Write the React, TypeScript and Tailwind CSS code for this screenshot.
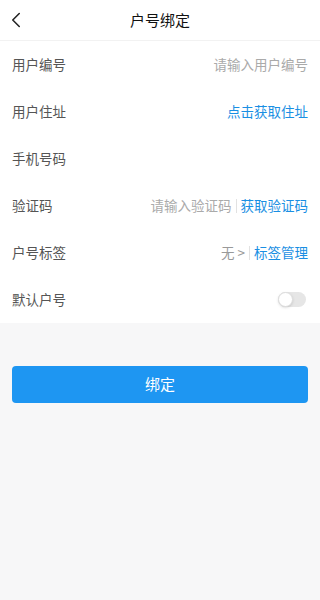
import { ChevronLeft } from 'lucide-react'
import type { ReactNode } from 'react'

function Row({ label, children }: { label: string; children?: ReactNode }) {
  return (
    <div className="flex h-[47px] items-center justify-between px-3">
      <span className="text-[13.5px] text-[#555]">{label}</span>
      <div className="flex items-center text-[13.5px]">{children}</div>
    </div>
  )
}

export default function App() {
  return (
    <div
      className="flex min-h-[600px] flex-col bg-[#f7f7f8]"
      style={{ fontFamily: '"Noto Sans CJK SC", "Noto Sans", sans-serif' }}
    >
      <header className="relative flex h-[41px] items-center justify-center border-b border-[#f2f2f2] bg-white">
        <ChevronLeft aria-hidden className="absolute left-[3px] size-[26px] text-[#222]" strokeWidth={1.4} />
        <h1 className="text-[15px] font-normal text-[#111]">户号绑定</h1>
      </header>

      <div className="flex flex-col bg-white">
        <Row label="用户编号">
          <span className="text-[#aaa]">请输入用户编号</span>
        </Row>
        <Row label="用户住址">
          <span className="text-[#1a8fe3]">点击获取住址</span>
        </Row>
        <Row label="手机号码" />
        <Row label="验证码">
          <span className="text-[#aaa]">请输入验证码</span>
          <span className="mx-[4px] h-[14px] w-px bg-[#e2e2e2]" />
          <span className="text-[#1a8fe3]">获取验证码</span>
        </Row>
        <Row label="户号标签">
          <span className="text-[#999]">无 &gt;</span>
          <span className="mx-[4px] h-[14px] w-px bg-[#e2e2e2]" />
          <span className="text-[#1a8fe3]">标签管理</span>
        </Row>
        <Row label="默认户号">
          <span className="mr-[2px] flex h-[15px] w-[28px] items-center rounded-full bg-[#e6e6e6]">
            <span className="size-[15px] rounded-full border border-[#ddd] bg-white shadow-sm" />
          </span>
        </Row>
      </div>

      <div className="px-3 pt-[43px]">
        <button
          type="button"
          className="flex h-[37px] w-full items-center justify-center rounded-[4px] bg-[#1e96f2] text-[15px] text-white"
        >
          绑定
        </button>
      </div>
    </div>
  )
}
